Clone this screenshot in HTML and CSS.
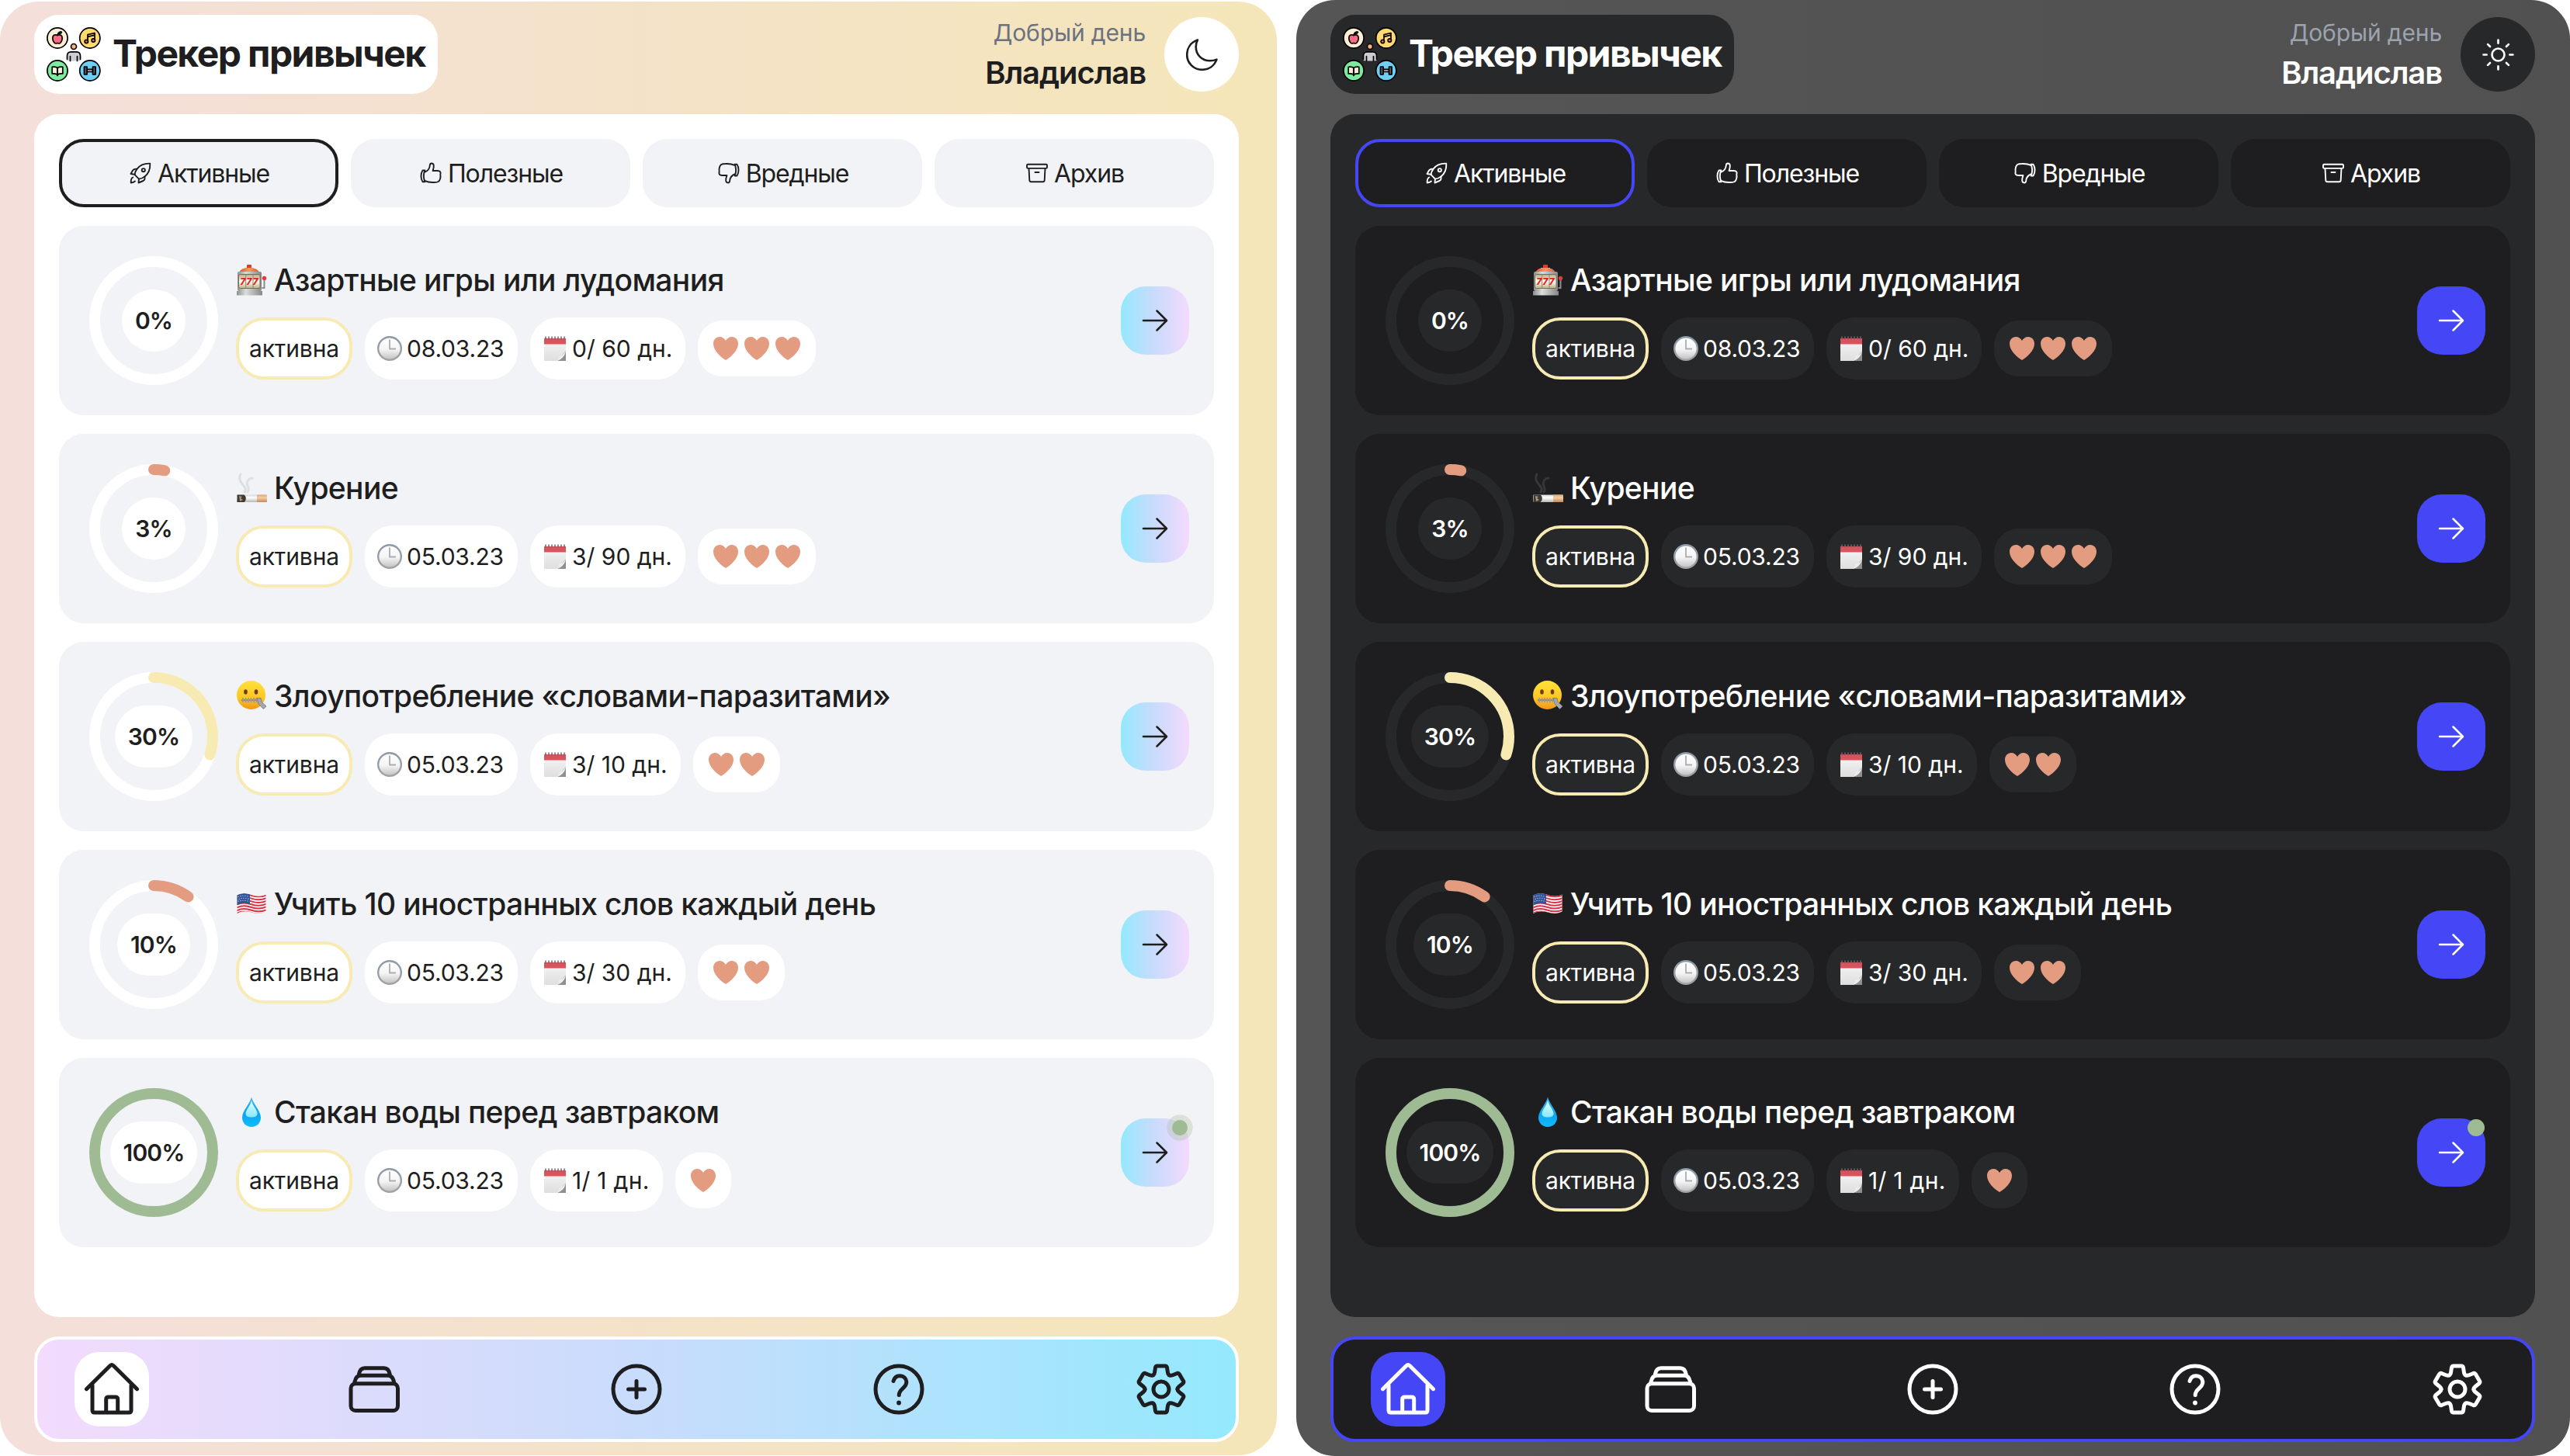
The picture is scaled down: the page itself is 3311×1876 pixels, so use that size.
FILE: index.html
```html
<!DOCTYPE html>
<html lang="ru">
<head>
<meta charset="utf-8">
<title>Трекер привычек</title>
<link rel="stylesheet" href="styles.css">
</head>
<body>
<svg class="sprite" aria-hidden="true">
  <defs>
    <linearGradient id="g-clock" x1="0" y1="0" x2="0" y2="1"><stop offset="0" stop-color="#8b99ab"/><stop offset="1" stop-color="#a3a3a3"/></linearGradient>
    <linearGradient id="g-dial" x1="0" y1="0" x2="0" y2="1"><stop offset="0" stop-color="#fff"/><stop offset=".55" stop-color="#f4f4f4"/><stop offset="1" stop-color="#c4c4c4"/></linearGradient>
    <linearGradient id="g-page" x1="0" y1="0" x2="0" y2="1"><stop offset="0" stop-color="#f6f6f6"/><stop offset="1" stop-color="#dedede"/></linearGradient>
    <linearGradient id="g-face" x1="0" y1="0" x2="0" y2="1"><stop offset="0" stop-color="#ffe23a"/><stop offset=".6" stop-color="#fdc526"/><stop offset="1" stop-color="#ef9718"/></linearGradient>
    <linearGradient id="g-drop" x1="0" y1="0" x2="0" y2="1"><stop offset="0" stop-color="#35b4f4"/><stop offset=".6" stop-color="#0da5f3"/><stop offset="1" stop-color="#12bdf8"/></linearGradient>
    <linearGradient id="g-shine" x1="0" y1="0" x2="0" y2="1"><stop offset="0" stop-color="#e9ffff"/><stop offset="1" stop-color="#86e9fd"/></linearGradient>
    <linearGradient id="g-metal" x1="0" y1="0" x2="1" y2="0"><stop offset="0" stop-color="#8d8f8f"/><stop offset=".35" stop-color="#dcdedd"/><stop offset="1" stop-color="#858787"/></linearGradient>
    <linearGradient id="g-dome" x1="0" y1="0" x2="1" y2="0"><stop offset="0" stop-color="#d9543a"/><stop offset=".5" stop-color="#fb9a5c"/><stop offset="1" stop-color="#d9543a"/></linearGradient>
    <linearGradient id="g-reel" x1="0" y1="0" x2="0" y2="1"><stop offset="0" stop-color="#b3ab84"/><stop offset=".5" stop-color="#fffef2"/><stop offset="1" stop-color="#b9b28d"/></linearGradient>
    <linearGradient id="g-paper" x1="0" y1="0" x2="0" y2="1"><stop offset="0" stop-color="#d8d8d8"/><stop offset=".4" stop-color="#fff"/><stop offset="1" stop-color="#b5b5b5"/></linearGradient>
    <linearGradient id="g-filter" x1="0" y1="0" x2="0" y2="1"><stop offset="0" stop-color="#dba777"/><stop offset=".4" stop-color="#f6cda4"/><stop offset="1" stop-color="#c08a5c"/></linearGradient>
  </defs>

  <symbol id="logo" viewBox="0 0 70 70">
    <g stroke="#000" stroke-width="1.7" stroke-linecap="round" stroke-linejoin="round">
      <circle cx="14" cy="14" r="13.1" fill="#fdeed6"/>
      <circle cx="55.8" cy="14" r="13.1" fill="#fdd96f"/>
      <circle cx="14" cy="56" r="13.1" fill="#7deaa0"/>
      <circle cx="55.8" cy="56" r="13.1" fill="#6dcff3"/>
      <path fill="#fe6b85" d="M14 10.6c-3.500-1.800-6.200 0-6.200 3.400 0 3.700 2.200 7 4 7 .9 0 1.300-.4 2.200-.4s1.300.4 2.200.4c1.800 0 4-3.300 4-7 0-3.400-2.700-5.200-6.200-3.400z"/>
      <path fill="#62d58a" d="M14 10.300c.2-1.600.8-2.500 1.600-3.200M15.400 8c1-2 2.600-2.300 4-1.800-.4 1.700-2 2.500-4 1.800z"/>
      <path fill="none" d="M53 18.500V9.700l9-2.200v9.500M53 12.300l9-2.200"/>
      <circle cx="51.300" cy="18.500" r="2.200" fill="#fc6f4b"/>
      <circle cx="60.300" cy="17" r="2.200" fill="#fc6f4b"/>
      <path fill="#fdf0d5" d="M14 52.500c-2-1.300-4.200-1.500-6.800-1.200v8.700c2.600-.2 4.800 0 6.800 1.200 2-1.200 4.200-1.400 6.800-1.200v-8.700c-2.600-.3-4.800-.1-6.800 1.200zv10"/>
      <path fill="none" d="M14 53v9"/>
      <path fill="#c9c4cf" d="M52 54.300h7.500v3.200H52z"/>
      <path fill="#5d5964" d="M48.500 51h3.600v9.800h-3.600zM59.500 51h3.600v9.800h-3.600z"/>
      <circle cx="35" cy="25" r="3.500" fill="#fdb276"/>
      <path fill="#cfccd4" stroke="none" d="M26.500 43v-6c0-3.300 2-5.200 5-5.200h7c3 0 5 1.900 5 5.200v6l-3 .6h-11z"/>
      <path fill="none" d="M26.500 41.500V37c0-3.300 2-5.200 5-5.200h7c3 0 5 1.900 5 5.200v4.500M30.500 37.500v6M39.500 37.500v6"/>
    </g>
  </symbol>

  <symbol id="moon" viewBox="0 0 40 40"><path fill="none" stroke="currentColor" stroke-width="2.600" stroke-linejoin="round" d="M14.500 1.500C6 4.500 1.200 11.500 1.200 20c0 10.500 8.300 18.800 18.800 18.800 8.500 0 15.500-4.800 18.500-12.800-3 1.400-5.700 1.600-8.500 1.600-10.200 0-17.600-7.600-17.600-17.600 0-3 .6-5.800 2.100-8.500z"/></symbol>
  <symbol id="sun" viewBox="0 0 40 40"><g fill="none" stroke="currentColor" stroke-width="2.600" stroke-linecap="round"><circle cx="20" cy="20" r="7.800"/><path d="M20 1.500v4M20 34.500v4M1.500 20h4M34.500 20h4M6.900 6.900l2.900 2.900M30.200 30.200l2.900 2.900M6.900 33.100l2.900-2.900M30.200 9.800l2.900-2.900"/></g></symbol>

  <symbol id="rocket" viewBox="0 0 32 32"><g fill="none" stroke="currentColor" stroke-width="1.900" stroke-linejoin="round" stroke-linecap="round"><path d="M28.300 3.700c-7-.3-13 2-16.700 6.900-1.800 2.300-2.800 5-3 7.600l5.400 5.400c2.800-.3 5.300-1.300 7.500-3.200 4.900-4 7.200-9.700 6.800-16.700z"/><circle cx="19.800" cy="12.200" r="2.100"/><path d="M11.300 10.900c-2.500-.6-4.300 0-5.400 1.900L3.500 17l5.100.8M21.400 20.500c.6 2.500 0 4.400-1.900 5.500l-6 2.500.4-4.900M6.300 21.500c-2.200 1-2.800 3.600-2.600 7 2.200-.1 3.900-.7 5.200-2"/></g></symbol>
  <symbol id="thumb-up" viewBox="0 0 32 32"><g fill="none" stroke="currentColor" stroke-width="1.900" stroke-linejoin="round" stroke-linecap="round"><path d="M8.500 14.500c4.300-1.600 6-4.800 6.300-8.500.2-3.400 4.600-3.300 5 .3.200 2.500-.5 4.600-1.200 6.700h6c3.600 0 4.700 2.200 3.700 4.700.6 4-.4 7.500-2.400 9.300-1.800 1-3.600 1-5.600 1-4.500.2-8 0-11.500-1.800"/><path d="M8.300 12.500H5.500c-2.700 4-2.700 11 0 14.800h3c-2-4.500-2-10.300-.2-14.800z"/></g></symbol>
  <symbol id="archive" viewBox="0 0 32 32"><g fill="none" stroke="currentColor" stroke-width="1.900" stroke-linejoin="round" stroke-linecap="round"><rect x="3" y="4.700" width="26" height="5.200" rx="1.400"/><path d="M5.500 10l.8 15.200c.1 1.400.8 2 2.200 2h15c1.400 0 2.100-.6 2.200-2L26.500 10M13.500 15h5"/></g></symbol>

  <symbol id="arrow" viewBox="0 0 34 34"><path fill="none" stroke="currentColor" stroke-width="2.500" stroke-linecap="round" stroke-linejoin="round" d="M2 17h29.500M19.500 4.500L32 17 19.500 29.500"/></symbol>
  <symbol id="heart" viewBox="0 0 40 40"><path fill="#e49c80" d="M20 35C13 31 4 22.500 4 13.800 4 8.500 7.500 5 12 5c3.600 0 6.500 2 8 5 1.500-3 4.400-5 8-5 4.500 0 8 3.500 8 8.800C36 22.500 27 31 20 35z"/></symbol>

  <symbol id="home" viewBox="0 0 96 96"><g fill="none" stroke="currentColor" stroke-width="5" stroke-linecap="round" stroke-linejoin="round"><path d="M15.500 47.700L46 17.500q2-1.800 4 0l30.500 30.200"/><path d="M23 43v32q0 3 3 3h44q3 0 3-3V43"/><path d="M40.700 77V61q0-3 3-3h9q3 0 3 3v16"/></g></symbol>
  <symbol id="stack" viewBox="0 0 96 96"><g fill="none" stroke="currentColor" stroke-width="5" stroke-linejoin="round"><rect x="18" y="40.700" width="60.500" height="34.800" rx="6"/><path d="M23 42v-3.500q1.500-8.200 8-8.200h34.500q6.500 0 8 8.200V42M28.300 31v-2q1.500-8.300 7.500-8.300h25q6 0 7.500 8.300v2"/></g></symbol>
  <symbol id="plus" viewBox="0 0 96 96"><g fill="none" stroke="currentColor" stroke-width="5" stroke-linecap="round"><circle cx="48" cy="48" r="30"/><path d="M48 37.500v21M37.500 48h21"/></g></symbol>
  <symbol id="help" viewBox="0 0 96 96"><g fill="none" stroke="currentColor" stroke-width="5" stroke-linecap="round" stroke-linejoin="round"><circle cx="48" cy="48" r="30"/><path d="M41 37.500c1.200-4.700 4-6.800 8-6.800 5.200 0 8.800 3.400 8.800 8.300 0 7.500-9.600 8.200-9.600 16.500"/></g><circle cx="48" cy="65.500" r="2.900" fill="currentColor"/></symbol>
  <symbol id="gear" viewBox="-48 -48 96 96">
    <g fill="none" stroke="currentColor" stroke-width="5" stroke-linecap="round" stroke-linejoin="round">
      <circle r="10"/>
      <path d="M-10.450-18.100Q-8.800-19-8.400-22L-7.500-28Q-7-30-5-30H5Q7-30 7.500-28L8.400-22Q8.800-19 10.450-18.100"/>
      <path transform="rotate(60)" d="M-10.450-18.100Q-8.800-19-8.400-22L-7.500-28Q-7-30-5-30H5Q7-30 7.500-28L8.400-22Q8.800-19 10.450-18.100"/>
      <path transform="rotate(120)" d="M-10.450-18.100Q-8.800-19-8.400-22L-7.500-28Q-7-30-5-30H5Q7-30 7.500-28L8.400-22Q8.800-19 10.450-18.100"/>
      <path transform="rotate(180)" d="M-10.450-18.100Q-8.800-19-8.400-22L-7.500-28Q-7-30-5-30H5Q7-30 7.500-28L8.400-22Q8.800-19 10.450-18.100"/>
      <path transform="rotate(240)" d="M-10.450-18.100Q-8.800-19-8.400-22L-7.500-28Q-7-30-5-30H5Q7-30 7.500-28L8.400-22Q8.800-19 10.450-18.100"/>
      <path transform="rotate(300)" d="M-10.450-18.100Q-8.800-19-8.400-22L-7.500-28Q-7-30-5-30H5Q7-30 7.500-28L8.400-22Q8.800-19 10.450-18.100"/>
    </g>
  </symbol>

  <symbol id="clock" viewBox="0 0 32 32"><circle cx="16" cy="16" r="16" fill="url(#g-clock)"/><circle cx="16" cy="16" r="13.600" fill="url(#g-dial)"/><path d="M16 4.500V16.500h8" fill="none" stroke="#a9adb0" stroke-width="1.800"/></symbol>
  <symbol id="calendar" viewBox="0 0 32 32"><path fill="url(#g-page)" d="M2 3h28v17L19.500 32H2z"/><path fill="#d9525c" d="M2 3h28v7.500H2z"/><path fill="#8f8f8f" d="M19.500 32L30 19v13z"/><path fill="#ececec" d="M17 32c4-1 3.500-4 4-6.500C25 25.500 28 23 30 18.500 29.500 25 25 31 17 32z"/><path d="M4 .5v4M8 .5v4M12 .5v4M16 .5v4M20 .5v4M24 .5v4M28 .5v4" stroke="#77646a" stroke-width="1.500"/></symbol>

  <symbol id="slot" viewBox="0 0 40 40"><rect x="14" y="0" width="6" height="5" rx="1" fill="#df3b2c"/><path fill="#c9cbca" d="M11 4h12v3H11z"/><path fill="url(#g-dome)" d="M4 10C6 5.500 11 4 17 4s11 1.500 13 6z"/><rect x="2" y="9" width="31" height="25" rx="2" fill="url(#g-metal)"/><rect x="3.500" y="12.500" width="27.500" height="18" rx="2" fill="url(#g-reel)" stroke="#74704f" stroke-width="1"/><path d="M12.700 13v17M22 13v17" stroke="#8d8866" stroke-width="1"/><path fill="url(#g-metal)" d="M1 34h33v5.500H1z"/><path d="M33.500 30h3V18" fill="none" stroke="#8b8d8d" stroke-width="2"/><circle cx="36.500" cy="17.500" r="2.700" fill="#e5393b"/></symbol>
  <symbol id="cigarette" viewBox="0 0 40 40"><g fill="none" stroke="#969696" stroke-linecap="round"><path stroke-opacity=".22" stroke-width="3" d="M11 25C17 18 0 13 6 2"/><path stroke-opacity=".2" stroke-width="3" d="M15 25c4-5-3-9 0-14 1.500-3 4-4 6-4"/></g><rect x="1" y="28.500" width="39" height="9.500" rx="1" fill="url(#g-paper)"/><path fill="#3f3831" d="M1.500 28.500h9c3 2 3 7.500 0 9.500h-9z"/><path fill="#a99a86" d="M4 30l4 1-2 2 3 2-4 2z"/><path fill="url(#g-filter)" d="M27 28.500h12q1 0 1 1V37q0 1-1 1H27z"/></symbol>
  <symbol id="zipper" viewBox="0 0 40 40"><circle cx="19.500" cy="18.500" r="18.500" fill="url(#g-face)"/><ellipse cx="12.500" cy="14.500" rx="2.300" ry="3.200" fill="#6b3f10"/><ellipse cx="26" cy="14.500" rx="2.300" ry="3.200" fill="#6b3f10"/><path d="M7 25h24" stroke="#8a7a50" stroke-width="1.600" fill="none"/><path d="M9 22v6M12.500 22v6M16 22v6M19.500 22v6M23 22v6M26.500 22v6" stroke="#9b9da5" stroke-width="1.900"/><path fill="#a4a7ae" stroke="#74767d" stroke-width=".8" d="M27 22.500h5l1 5 6 5.500-3.500 3.500-6.500-6.500z"/></symbol>
  <symbol id="flag" viewBox="0 0 40 40"><clipPath id="flag-shape"><path d="M1.500 8.500C8 5 14 6 20 8s12 2.500 18.500-.5v22C32 33 26 32 20 30.500s-12-2-18.500 1.500z"/></clipPath><g clip-path="url(#flag-shape)"><path fill="#fff" d="M0 0h40v40H0z"/><g fill="none" stroke="#dc2f43" stroke-width="2"><path d="M1 9.300C8 5.800 14 6.800 20 8.800s12 2.500 19-.5M1 13.100c7-3.500 13-2.500 19-.5s12 2.500 19-.5M1 16.900c7-3.500 13-2.500 19-.5s12 2.500 19-.5M1 20.700c7-3.500 13-2.500 19-.5s12 2.500 19-.5M1 24.500c7-3.500 13-2.500 19-.5s12 2.500 19-.5M1 28.300c7-3.500 13-2.500 19-.5s12 2.500 19-.5M1 31.800c7-3.500 13-2.500 19-.5s12 2.500 19-.5"/></g><path fill="#2f5598" d="M1 8.500C8 5 13 5.800 18 7.300v13C13 18.700 7 18.300 1 21.300z"/><path stroke="#c6d4ec" stroke-width="1.100" stroke-dasharray="1.200 1.800" fill="none" d="M2.500 10.500c5-2 10-1.500 15 0M3.500 13.500c5-2 9-1.500 14 0M2.500 16.500c5-2 10-1.500 15 0"/></g></symbol>
  <symbol id="droplet" viewBox="0 0 40 40"><path fill="url(#g-drop)" d="M20 .5c1.500 8 12 17.500 12 26.500 0 7-5.300 12-12 12S8 34 8 27C8 18 18.500 8.500 20 .5z"/><path fill="url(#g-shine)" d="M20 4.500c1 7 7.500 12.500 7.500 17.500 0 3.200-3.200 4.500-7.500 4.500s-7.500-1.300-7.500-4.500c0-5 6.500-10.500 7.500-17.500z"/></symbol>
</svg>

<section class="app app--light">
  <header class="header">
    <div class="brand"><svg class="brand__logo"><use href="#logo"/></svg><h1 class="brand__name">Трекер привычек</h1></div>
    <div class="user">
      <div class="user__text"><span class="user__greeting">Добрый день</span><span class="user__name">Владислав</span></div>
      <button class="theme"><svg class="theme__icon"><use href="#moon"/></svg></button>
    </div>
  </header>
  <main class="board">
    <nav class="tabs">
      <button class="tab tab--active"><svg class="tab__icon"><use href="#rocket"/></svg>Активные</button>
      <button class="tab"><svg class="tab__icon"><use href="#thumb-up"/></svg>Полезные</button>
      <button class="tab"><svg class="tab__icon tab__icon--flipped"><use href="#thumb-up"/></svg>Вредные</button>
      <button class="tab"><svg class="tab__icon"><use href="#archive"/></svg>Архив</button>
    </nav>
    <ul class="habits">
      <li class="habit">
        <div class="ring"><svg class="ring__svg" viewBox="0 0 166 166"><circle class="ring__track" cx="83" cy="83" r="76"/></svg><span class="ring__value">0%</span></div>
        <div class="habit__body">
          <h2 class="habit__title"><svg class="habit__emoji" viewBox="0 0 40 40"><use href="#slot"/><text class="slot-digits" x="17.300" y="26" text-anchor="middle">777</text></svg>Азартные игры или лудомания</h2>
          <div class="meta"><span class="pill pill--status">активна</span><span class="pill pill--date"><svg class="pill__icon"><use href="#clock"/></svg>08.03.23</span><span class="pill"><svg class="pill__icon"><use href="#calendar"/></svg>0/ 60 дн.</span><span class="hearts"><svg><use href="#heart"/></svg><svg><use href="#heart"/></svg><svg><use href="#heart"/></svg></span></div>
        </div>
        <button class="next"><svg class="next__icon"><use href="#arrow"/></svg></button>
      </li>
      <li class="habit">
        <div class="ring"><svg class="ring__svg" viewBox="0 0 166 166"><circle class="ring__track" cx="83" cy="83" r="76"/><circle class="ring__arc ring__arc--low" cx="83" cy="83" r="76" pathLength="100" stroke-dasharray="3 100"/></svg><span class="ring__value">3%</span></div>
        <div class="habit__body">
          <h2 class="habit__title"><svg class="habit__emoji"><use href="#cigarette"/></svg>Курение</h2>
          <div class="meta"><span class="pill pill--status">активна</span><span class="pill pill--date"><svg class="pill__icon"><use href="#clock"/></svg>05.03.23</span><span class="pill"><svg class="pill__icon"><use href="#calendar"/></svg>3/ 90 дн.</span><span class="hearts"><svg><use href="#heart"/></svg><svg><use href="#heart"/></svg><svg><use href="#heart"/></svg></span></div>
        </div>
        <button class="next"><svg class="next__icon"><use href="#arrow"/></svg></button>
      </li>
      <li class="habit">
        <div class="ring"><svg class="ring__svg" viewBox="0 0 166 166"><circle class="ring__track" cx="83" cy="83" r="76"/><circle class="ring__arc ring__arc--mid" cx="83" cy="83" r="76" pathLength="100" stroke-dasharray="30 100"/></svg><span class="ring__value">30%</span></div>
        <div class="habit__body">
          <h2 class="habit__title"><svg class="habit__emoji"><use href="#zipper"/></svg>Злоупотребление «словами-паразитами»</h2>
          <div class="meta"><span class="pill pill--status">активна</span><span class="pill pill--date"><svg class="pill__icon"><use href="#clock"/></svg>05.03.23</span><span class="pill"><svg class="pill__icon"><use href="#calendar"/></svg>3/ 10 дн.</span><span class="hearts"><svg><use href="#heart"/></svg><svg><use href="#heart"/></svg></span></div>
        </div>
        <button class="next"><svg class="next__icon"><use href="#arrow"/></svg></button>
      </li>
      <li class="habit">
        <div class="ring"><svg class="ring__svg" viewBox="0 0 166 166"><circle class="ring__track" cx="83" cy="83" r="76"/><circle class="ring__arc ring__arc--low" cx="83" cy="83" r="76" pathLength="100" stroke-dasharray="10 100"/></svg><span class="ring__value">10%</span></div>
        <div class="habit__body">
          <h2 class="habit__title"><svg class="habit__emoji"><use href="#flag"/></svg>Учить 10 иностранных слов каждый день</h2>
          <div class="meta"><span class="pill pill--status">активна</span><span class="pill pill--date"><svg class="pill__icon"><use href="#clock"/></svg>05.03.23</span><span class="pill"><svg class="pill__icon"><use href="#calendar"/></svg>3/ 30 дн.</span><span class="hearts"><svg><use href="#heart"/></svg><svg><use href="#heart"/></svg></span></div>
        </div>
        <button class="next"><svg class="next__icon"><use href="#arrow"/></svg></button>
      </li>
      <li class="habit">
        <div class="ring"><svg class="ring__svg" viewBox="0 0 166 166"><circle class="ring__track" cx="83" cy="83" r="76"/><circle class="ring__arc ring__arc--done" cx="83" cy="83" r="76"/></svg><span class="ring__value">100%</span></div>
        <div class="habit__body">
          <h2 class="habit__title"><svg class="habit__emoji"><use href="#droplet"/></svg>Стакан воды перед завтраком</h2>
          <div class="meta"><span class="pill pill--status">активна</span><span class="pill pill--date"><svg class="pill__icon"><use href="#clock"/></svg>05.03.23</span><span class="pill pill--short"><svg class="pill__icon"><use href="#calendar"/></svg>1/ 1 дн.</span><span class="hearts"><svg><use href="#heart"/></svg></span></div>
        </div>
        <button class="next"><svg class="next__icon"><use href="#arrow"/></svg><i class="next__badge"></i></button>
      </li>
    </ul>
  </main>
  <nav class="dock">
    <a class="dock__item dock__item--active"><svg><use href="#home"/></svg></a>
    <a class="dock__item"><svg><use href="#stack"/></svg></a>
    <a class="dock__item"><svg><use href="#plus"/></svg></a>
    <a class="dock__item"><svg><use href="#help"/></svg></a>
    <a class="dock__item"><svg><use href="#gear"/></svg></a>
  </nav>
</section>

<section class="app app--dark">
  <header class="header">
    <div class="brand"><svg class="brand__logo"><use href="#logo"/></svg><h1 class="brand__name">Трекер привычек</h1></div>
    <div class="user">
      <div class="user__text"><span class="user__greeting">Добрый день</span><span class="user__name">Владислав</span></div>
      <button class="theme"><svg class="theme__icon"><use href="#sun"/></svg></button>
    </div>
  </header>
  <main class="board">
    <nav class="tabs">
      <button class="tab tab--active"><svg class="tab__icon"><use href="#rocket"/></svg>Активные</button>
      <button class="tab"><svg class="tab__icon"><use href="#thumb-up"/></svg>Полезные</button>
      <button class="tab"><svg class="tab__icon tab__icon--flipped"><use href="#thumb-up"/></svg>Вредные</button>
      <button class="tab"><svg class="tab__icon"><use href="#archive"/></svg>Архив</button>
    </nav>
    <ul class="habits">
      <li class="habit">
        <div class="ring"><svg class="ring__svg" viewBox="0 0 166 166"><circle class="ring__track" cx="83" cy="83" r="76"/></svg><span class="ring__value">0%</span></div>
        <div class="habit__body">
          <h2 class="habit__title"><svg class="habit__emoji" viewBox="0 0 40 40"><use href="#slot"/><text class="slot-digits" x="17.300" y="26" text-anchor="middle">777</text></svg>Азартные игры или лудомания</h2>
          <div class="meta"><span class="pill pill--status">активна</span><span class="pill pill--date"><svg class="pill__icon"><use href="#clock"/></svg>08.03.23</span><span class="pill"><svg class="pill__icon"><use href="#calendar"/></svg>0/ 60 дн.</span><span class="hearts"><svg><use href="#heart"/></svg><svg><use href="#heart"/></svg><svg><use href="#heart"/></svg></span></div>
        </div>
        <button class="next"><svg class="next__icon"><use href="#arrow"/></svg></button>
      </li>
      <li class="habit">
        <div class="ring"><svg class="ring__svg" viewBox="0 0 166 166"><circle class="ring__track" cx="83" cy="83" r="76"/><circle class="ring__arc ring__arc--low" cx="83" cy="83" r="76" pathLength="100" stroke-dasharray="3 100"/></svg><span class="ring__value">3%</span></div>
        <div class="habit__body">
          <h2 class="habit__title"><svg class="habit__emoji"><use href="#cigarette"/></svg>Курение</h2>
          <div class="meta"><span class="pill pill--status">активна</span><span class="pill pill--date"><svg class="pill__icon"><use href="#clock"/></svg>05.03.23</span><span class="pill"><svg class="pill__icon"><use href="#calendar"/></svg>3/ 90 дн.</span><span class="hearts"><svg><use href="#heart"/></svg><svg><use href="#heart"/></svg><svg><use href="#heart"/></svg></span></div>
        </div>
        <button class="next"><svg class="next__icon"><use href="#arrow"/></svg></button>
      </li>
      <li class="habit">
        <div class="ring"><svg class="ring__svg" viewBox="0 0 166 166"><circle class="ring__track" cx="83" cy="83" r="76"/><circle class="ring__arc ring__arc--mid" cx="83" cy="83" r="76" pathLength="100" stroke-dasharray="30 100"/></svg><span class="ring__value">30%</span></div>
        <div class="habit__body">
          <h2 class="habit__title"><svg class="habit__emoji"><use href="#zipper"/></svg>Злоупотребление «словами-паразитами»</h2>
          <div class="meta"><span class="pill pill--status">активна</span><span class="pill pill--date"><svg class="pill__icon"><use href="#clock"/></svg>05.03.23</span><span class="pill"><svg class="pill__icon"><use href="#calendar"/></svg>3/ 10 дн.</span><span class="hearts"><svg><use href="#heart"/></svg><svg><use href="#heart"/></svg></span></div>
        </div>
        <button class="next"><svg class="next__icon"><use href="#arrow"/></svg></button>
      </li>
      <li class="habit">
        <div class="ring"><svg class="ring__svg" viewBox="0 0 166 166"><circle class="ring__track" cx="83" cy="83" r="76"/><circle class="ring__arc ring__arc--low" cx="83" cy="83" r="76" pathLength="100" stroke-dasharray="10 100"/></svg><span class="ring__value">10%</span></div>
        <div class="habit__body">
          <h2 class="habit__title"><svg class="habit__emoji"><use href="#flag"/></svg>Учить 10 иностранных слов каждый день</h2>
          <div class="meta"><span class="pill pill--status">активна</span><span class="pill pill--date"><svg class="pill__icon"><use href="#clock"/></svg>05.03.23</span><span class="pill"><svg class="pill__icon"><use href="#calendar"/></svg>3/ 30 дн.</span><span class="hearts"><svg><use href="#heart"/></svg><svg><use href="#heart"/></svg></span></div>
        </div>
        <button class="next"><svg class="next__icon"><use href="#arrow"/></svg></button>
      </li>
      <li class="habit">
        <div class="ring"><svg class="ring__svg" viewBox="0 0 166 166"><circle class="ring__track" cx="83" cy="83" r="76"/><circle class="ring__arc ring__arc--done" cx="83" cy="83" r="76"/></svg><span class="ring__value">100%</span></div>
        <div class="habit__body">
          <h2 class="habit__title"><svg class="habit__emoji"><use href="#droplet"/></svg>Стакан воды перед завтраком</h2>
          <div class="meta"><span class="pill pill--status">активна</span><span class="pill pill--date"><svg class="pill__icon"><use href="#clock"/></svg>05.03.23</span><span class="pill pill--short"><svg class="pill__icon"><use href="#calendar"/></svg>1/ 1 дн.</span><span class="hearts"><svg><use href="#heart"/></svg></span></div>
        </div>
        <button class="next"><svg class="next__icon"><use href="#arrow"/></svg><i class="next__badge"></i></button>
      </li>
    </ul>
  </main>
  <nav class="dock">
    <a class="dock__item dock__item--active"><svg><use href="#home"/></svg></a>
    <a class="dock__item"><svg><use href="#stack"/></svg></a>
    <a class="dock__item"><svg><use href="#plus"/></svg></a>
    <a class="dock__item"><svg><use href="#help"/></svg></a>
    <a class="dock__item"><svg><use href="#gear"/></svg></a>
  </nav>
</section>
</body>
</html>
```
FILE: styles.css
```css
*, *::before, *::after { box-sizing: border-box; }

body {
  margin: 0;
  display: flex;
  gap: 25px;
  width: 3311px;
  height: 1876px;
  overflow: hidden;
  background: #fff;
  font-family: Inter, "Noto Sans", sans-serif;
}

h1, h2, ul { margin: 0; padding: 0; list-style: none; }
button { margin: 0; padding: 0; border: 0; font: inherit; color: inherit; background: none; }
svg { display: block; flex: none; }

.sprite { position: absolute; width: 0; height: 0; }
.slot-digits { font: italic 800 12px Inter, sans-serif; letter-spacing: 0.8px; fill: #e0201f; }

/* Themes */
.app--light {
  --text: #1e1e20;
  --muted: #6b7280;
  --surface: #fff;
  --item: #f2f3f6;
  --tab-active: #1e1e20;
  --next: linear-gradient(90deg, #94e9fd, #c9dbfc 50%, #f4dafd);
  --dock: linear-gradient(90deg, #f3dbfc, #c9dcfc 50%, #94e9fd);
  --dock-border: #fff;
  --dock-active: #fff;
  width: 1645px;
  margin-top: 2px;
  padding-top: 17px;
  height: 1873px;
  background: linear-gradient(90deg, #f4dfdb, #f4e2c8 50%, #f5e6b9);
}

.app--dark {
  --text: #fff;
  --muted: #9ca3af;
  --surface: #272829;
  --item: #1e1e20;
  --tab-active: #4547f6;
  --next: #4547f6;
  --dock: #1e1e20;
  --dock-border: #4547f6;
  --dock-active: #4547f6;
  width: 1641px;
  padding-top: 19px;
  height: 1876px;
  background: linear-gradient(90deg, #555, #515151);
}

.app {
  flex: none;
  padding-left: 44px;
  display: flex;
  flex-direction: column;
  align-items: flex-start;
  border-radius: 50px;
  color: var(--text);
}

/* Header */
.header {
  width: 1552px;
  height: 102px;
  display: flex;
  align-items: center;
  justify-content: space-between;
}

.brand {
  width: 520px;
  height: 102px;
  padding-left: 16px;
  display: flex;
  align-items: center;
  gap: 15px;
  border-radius: 32px;
  background: var(--surface);
}
.brand__logo { width: 70px; height: 70px; }
.brand__name { padding-bottom: 3px; font-size: 48px; font-weight: 700; line-height: 56px; letter-spacing: -1.6px; white-space: nowrap; }

.user { display: flex; align-items: center; gap: 24px; }
.user__text { display: flex; flex-direction: column; align-items: flex-end; }
.user__greeting { font-size: 30px; line-height: 48px; letter-spacing: -0.15px; color: var(--muted); }
.user__name { font-size: 40px; font-weight: 600; line-height: 56px; letter-spacing: -1.1px; }

.theme { width: 96px; height: 96px; display: grid; place-items: center; border-radius: 50%; background: var(--surface); }
.theme__icon { width: 41px; height: 41px; }

/* Board */
.board {
  width: 1552px;
  height: 1550px;
  margin-top: 26px;
  padding: 32px;
  display: flex;
  flex-direction: column;
  gap: 24px;
  border-radius: 32px;
  background: var(--surface);
}

.tabs { display: grid; grid-template-columns: repeat(4, 1fr); gap: 16px; }
.tab {
  height: 88px;
  display: flex;
  align-items: center;
  justify-content: center;
  gap: 6px;
  border: 4px solid transparent;
  border-radius: 32px;
  background: var(--item);
  background-clip: border-box;
  font-size: 32px;
  letter-spacing: -1.1px;
}
.tab--active { border-color: var(--tab-active); }
.tab__icon { width: 32px; height: 32px; }
.tab__icon--flipped { transform: rotate(180deg); }

.habits { display: flex; flex-direction: column; gap: 24px; }
.habit {
  height: 244px;
  padding: 0 32px 0 39px;
  display: flex;
  align-items: center;
  gap: 23px;
  border-radius: 32px;
  background: var(--item);
}

/* Progress ring */
.ring { flex: none; width: 166px; height: 166px; display: grid; place-items: center; }
.ring > * { grid-area: 1 / 1; }
.ring__svg { width: 166px; height: 166px; transform: rotate(-90deg); }
.ring__track, .ring__arc { fill: none; stroke-width: 14; }
.ring__track { stroke: var(--surface); }
.ring__arc { stroke-linecap: round; }
.ring__arc--low { stroke: #e49c80; }
.ring__arc--mid { stroke: #f7eab3; }
.ring__arc--done { stroke: #9ebb94; }
.ring__value {
  z-index: 1;
  min-width: 80px;
  height: 80px;
  padding: 0 17px;
  display: flex;
  align-items: center;
  justify-content: center;
  border-radius: 40px;
  background: var(--surface);
  font-size: 30px;
  font-weight: 600;
  letter-spacing: -0.9px;
}

/* Habit content */
.habit__body { flex: 1; display: flex; flex-direction: column; gap: 24px; }
.habit__title {
  display: flex;
  align-items: center;
  gap: 9px;
  font-size: 39px;
  font-weight: 550;
  line-height: 48px;
  letter-spacing: -0.65px;
  white-space: nowrap;
}
.habit__emoji { width: 40px; height: 40px; }

.meta { display: flex; align-items: center; gap: 16px; height: 80px; }
.pill {
  height: 80px;
  padding: 0 17px 0 16px;
  display: flex;
  align-items: center;
  gap: 6px;
  border-radius: 36px;
  background: var(--surface);
  font-size: 30px;
  white-space: nowrap;
}
.pill--status { width: 150px; padding: 0; justify-content: center; border: 4px solid #f7eab3; letter-spacing: -0.1px; }
.pill--date { width: 197px; letter-spacing: -0.2px; }
.pill--short { letter-spacing: 0.3px; }
.pill__icon { width: 32px; height: 32px; }

.hearts { height: 72px; padding: 0 16px; display: flex; align-items: center; border-radius: 32px; background: var(--surface); }
.hearts svg { width: 40px; height: 40px; }

.next {
  position: relative;
  flex: none;
  width: 88px;
  height: 88px;
  display: grid;
  place-items: center;
  border-radius: 32px;
  background: var(--next);
}
.next__icon { width: 34px; height: 34px; }
.next__badge {
  position: absolute;
  top: 2px;
  right: 2px;
  width: 20px;
  height: 20px;
  border-radius: 50%;
  background: #9ebb94;
  box-shadow: 0 0 0 6.7px rgba(158, 187, 148, 0.3);
}
.app--dark .next__badge { top: 1px; right: 1px; width: 22px; height: 22px; box-shadow: none; }

/* Dock */
.dock {
  width: 1552px;
  height: 136px;
  margin-top: 25px;
  padding: 0 48px;
  display: flex;
  align-items: center;
  justify-content: space-between;
  border: 4px solid var(--dock-border);
  border-radius: 32px;
  background: var(--dock);
  background-origin: border-box;
}
.dock__item { width: 96px; height: 96px; border-radius: 32px; }
.dock__item svg { width: 96px; height: 96px; }
.dock__item--active { background: var(--dock-active); }
```
